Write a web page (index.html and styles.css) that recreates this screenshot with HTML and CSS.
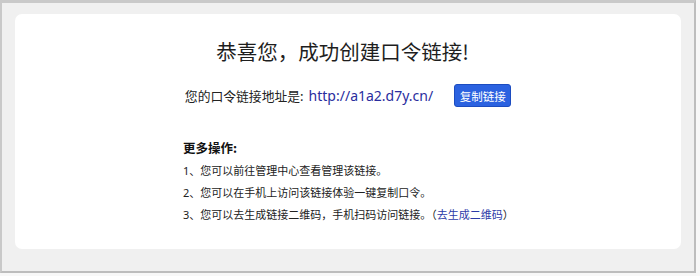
FILE: index.html
```html
<!DOCTYPE html>
<html lang="zh-CN">
<head>
<meta charset="utf-8">
<title>口令链接</title>
<link rel="stylesheet" href="styles.css">
</head>
<body>
<div class="frame">
  <div class="card">
    <h1 class="title">恭喜您，成功创建口令链接!</h1>
    <div class="column">
      <div class="address">
        <span class="label">您的口令链接地址是:</span>
        <a class="link" href="#">http://a1a2.d7y.cn/</a>
        <button class="copy" type="button">复制链接</button>
      </div>
      <div class="more">
        <h2 class="more-title">更多操作:</h2>
        <ul class="steps">
          <li>1、您可以前往管理中心查看管理该链接。</li>
          <li>2、您可以在手机上访问该链接体验一键复制口令。</li>
          <li>3、您可以去生成链接二维码，手机扫码访问链接。（<a class="inline-link" href="#">去生成二维码</a>）</li>
        </ul>
      </div>
    </div>
  </div>
</div>
</body>
</html>
```

FILE: styles.css
```css
* { box-sizing: border-box; }
html, body {
  margin: 0;
  padding: 0;
  background: #f8f8f8;
}
body {
  width: 700px;
  height: 276px;
  font-family: "Noto Sans", "Noto Sans CJK SC", sans-serif;
  color: #333;
}
.frame {
  width: 696px;
  height: 273px;
  border-top: 3px solid #c9c9c9;
  border-left: 2px solid #c9c9c9;
  border-right: 2px solid #bdbdbd;
  border-bottom: 2px solid #bdbdbd;
  background: #f0f0f0;
  padding: 11px 13px 22px 13px;
  display: flex;
}
.card {
  flex: 1;
  background: #fff;
  border-radius: 7px;
  padding-top: 23px;
  display: flex;
  flex-direction: column;
  align-items: center;
}
.title {
  margin: 0 11px 0 0;
  font-size: 20.5px;
  line-height: 28px;
  font-weight: normal;
  color: #1e1e1e;
  font-family: "Noto Sans CJK SC", sans-serif;
}
.column {
  width: 330px;
  display: flex;
  flex-direction: column;
}
.address {
  margin-top: 19px;
  height: 23px;
  display: flex;
  align-items: center;
  justify-content: center;
  font-size: 12.8px;
  color: #222;
  white-space: nowrap;
}
.label {
  font-family: "Noto Sans CJK SC", sans-serif;
}
.link {
  margin-left: 5px;
  color: #2a2d9e;
  text-decoration: none;
  font-size: 14px;
}
.copy {
  margin-left: 21px;
  width: 57px;
  height: 23px;
  padding: 0;
  border: 1px solid #1c4cc0;
  border-radius: 3px;
  background: #2b62e0;
  color: #fff;
  font-size: 11.5px;
  font-family: "Noto Sans CJK SC", sans-serif;
}
.more {
  margin-top: 31px;
}
.more-title {
  margin: 0;
  font-size: 12.5px;
  line-height: 20px;
  font-weight: bold;
  color: #111;
  font-family: "Noto Sans CJK SC", sans-serif;
}
.steps {
  list-style: none;
  margin: 2px 0 0;
  padding: 0;
  font-size: 11px;
  line-height: 22px;
  color: #222;
  white-space: nowrap;
}
.inline-link {
  color: #2d3ba8;
  text-decoration: none;
}
```
